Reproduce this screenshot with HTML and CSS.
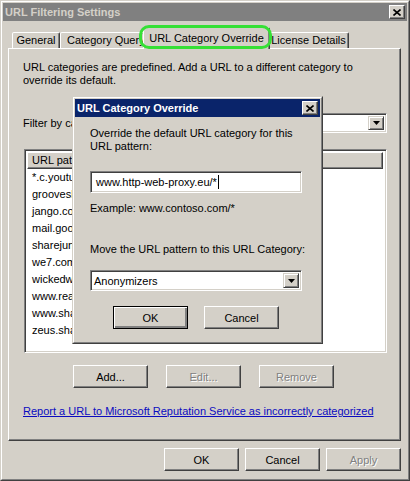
FILE: index.html
```html
<!DOCTYPE html>
<html lang="en">
<head>
<meta charset="utf-8">
<title>URL Filtering Settings</title>
<link rel="stylesheet" href="styles.css">
</head>
<body>
<div class="window">
  <div class="frame">
    <div class="caption inactive">
      <span class="caption-title">URL Filtering Settings</span>
      <span class="caption-btn">
        <svg width="8" height="7" viewBox="0 0 8 7"><path d="M0.5 0.5 L7.5 6.5 M7.5 0.5 L0.5 6.5" stroke="#000" stroke-width="1.6" fill="none"/></svg>
      </span>
    </div>
    <div class="client">
      <div class="tabs">
        <div class="tab tab-general">General</div>
        <div class="tab tab-query">Category Query</div>
        <div class="tab tab-override active">URL Category Override<span class="ring"></span></div>
        <div class="tab tab-license">License Details</div>
      </div>
      <div class="panel">
        <p class="desc">URL categories are predefined. Add a URL to a different category to<br>override its default.</p>
        <div class="filter-row">
          <span class="filter-label">Filter by category:</span>
          <div class="combo filter-combo">
            <span class="combo-value"></span>
            <span class="combo-btn"><svg width="7" height="4" viewBox="0 0 7 4"><polygon points="0,0 7,0 3.5,4" fill="#000"/></svg></span>
          </div>
        </div>
        <div class="list">
          <div class="list-header"><span class="list-header-cell">URL pattern</span></div>
          <div class="list-row">*.c.youtube.com/*</div>
          <div class="list-row">grooveshark.com/*</div>
          <div class="list-row">jango.com/*</div>
          <div class="list-row">mail.google.com/*</div>
          <div class="list-row">sharejunky.com/*</div>
          <div class="list-row">we7.com/*</div>
          <div class="list-row">wickedwords.com/*</div>
          <div class="list-row">www.realvnc.com/*</div>
          <div class="list-row">www.shareaza.com/*</div>
          <div class="list-row">zeus.shareaza.com/*</div>
        </div>
        <div class="btn-row">
          <button class="btn">Add...</button>
          <button class="btn" disabled>Edit...</button>
          <button class="btn" disabled>Remove</button>
        </div>
        <a class="link" href="#">Report a URL to Microsoft Reputation Service as incorrectly categorized</a>
      </div>
      <div class="footer">
        <button class="btn">OK</button>
        <button class="btn">Cancel</button>
        <button class="btn" disabled>Apply</button>
      </div>
    </div>
  </div>

  <div class="dialog">
    <div class="frame">
      <div class="caption active">
        <span class="caption-title">URL Category Override</span>
        <span class="caption-btn">
          <svg width="8" height="7" viewBox="0 0 8 7"><path d="M0.5 0.5 L7.5 6.5 M7.5 0.5 L0.5 6.5" stroke="#000" stroke-width="1.6" fill="none"/></svg>
        </span>
      </div>
      <div class="dialog-body">
        <p class="dlg-text">Override the default URL category for this<br>URL pattern:</p>
        <div class="field"><span class="field-text">www.http-web-proxy.eu/*</span><span class="caret"></span></div>
        <p class="dlg-text example">Example: www.contoso.com/*</p>
        <p class="dlg-text move">Move the URL pattern to this URL Category:</p>
        <div class="combo dlg-combo">
          <span class="combo-value">Anonymizers</span>
          <span class="combo-btn"><svg width="7" height="4" viewBox="0 0 7 4"><polygon points="0,0 7,0 3.5,4" fill="#000"/></svg></span>
        </div>
        <div class="dlg-buttons">
          <button class="btn default">OK</button>
          <button class="btn">Cancel</button>
        </div>
      </div>
    </div>
  </div>
</div>
</body>
</html>
```
FILE: styles.css
```css
html, body {
  margin: 0;
  background: #d4d0c8;
}

body {
  font-family: "Liberation Sans", Arial, sans-serif;
  font-size: 11px;
  color: #000;
}

p { margin: 0; }

/* Window chrome (classic 3D frame) */
.window {
  position: relative;
  width: 410px;
  height: 481px;
  box-sizing: border-box;
  border: 1px solid;
  border-color: #d4d0c8 #404040 #404040 #d4d0c8;
  background: #d4d0c8;
}

.frame {
  height: 100%;
  box-sizing: border-box;
  border: 1px solid;
  border-color: #fff #808080 #808080 #fff;
  padding: 1px;
  display: flex;
  flex-direction: column;
}

.caption {
  flex: none;
  height: 18px;
  display: flex;
  align-items: center;
  justify-content: space-between;
  padding: 0 2px;
}

.caption.inactive { background: #808080; color: #d4d0c8; }
.caption.active { background: #0a246a; color: #fff; }

.caption-title {
  font-weight: bold;
  white-space: nowrap;
}

.caption-btn {
  width: 16px;
  height: 14px;
  box-sizing: border-box;
  background: #d4d0c8;
  border: 1px solid;
  border-color: #fff #404040 #404040 #fff;
  box-shadow: inset -1px -1px #808080;
  display: flex;
  align-items: center;
  justify-content: center;
}

.caption-btn svg { display: block; }

/* Client area */
.client {
  flex: 1;
  display: flex;
  flex-direction: column;
  padding: 6px 6px 0 5px;
}

/* Tab strip */
.tabs {
  flex: none;
  height: 21px;
  display: flex;
  align-items: flex-end;
  padding-left: 4px;
  position: relative;
  z-index: 1;
}

.tab {
  height: 16px;
  box-sizing: border-box;
  border: 1px solid;
  border-bottom: none;
  border-color: #fff #404040 transparent #fff;
  box-shadow: inset -1px 0 #808080;
  border-radius: 2px 2px 0 0;
  background: #d4d0c8;
  line-height: 15px;
  text-align: center;
  white-space: nowrap;
  overflow: hidden;
}

.tab-general { width: 48px; }
.tab-query { width: 85px; text-align: left; padding-left: 6px; box-sizing: border-box; }
.tab-override { width: 127px; }
.tab-license { width: 81px; }

.tab.active {
  height: 22px;
  margin: 0 -2px -1px;
  line-height: 20px;
  position: relative;
  z-index: 2;
  overflow: visible;
}

.ring {
  position: absolute;
  left: -5px;
  right: -3px;
  top: -3px;
  bottom: 0;
  border: 3px solid #35e035;
  border-radius: 10px;
  pointer-events: none;
}

/* Tab page */
.panel {
  flex: none;
  height: 393px;
  box-sizing: border-box;
  border: 1px solid;
  border-color: #fff #404040 #404040 #fff;
  box-shadow: inset -1px -1px #808080;
  padding: 12px 13px 0 14px;
  display: flex;
  flex-direction: column;
}

.desc { line-height: 13px; }

.filter-row {
  display: flex;
  align-items: center;
  gap: 8px;
  margin-top: 26px;
  height: 20px;
}

.filter-label { white-space: nowrap; }

/* Sunken fields */
.combo, .field, .list {
  box-sizing: border-box;
  background: #fff;
  border: 1px solid;
  border-color: #808080 #fff #fff #808080;
  box-shadow: inset 1px 1px #404040, inset -1px -1px #d4d0c8;
}

.combo {
  display: flex;
  align-items: center;
  padding: 2px;
}

.filter-combo { flex: 1; height: 20px; }

.combo-value {
  flex: 1;
  padding-left: 1px;
  white-space: nowrap;
}

.combo-btn {
  width: 16px;
  height: 100%;
  box-sizing: border-box;
  background: #d4d0c8;
  border: 1px solid;
  border-color: #d4d0c8 #404040 #404040 #d4d0c8;
  box-shadow: inset 1px 1px #fff, inset -1px -1px #808080;
  display: flex;
  align-items: center;
  justify-content: center;
}

.combo-btn svg { display: block; }

/* List view */
.list {
  margin: 16px 0 0 1px;
  height: 204px;
  padding: 2px;
  overflow: hidden;
}

.list-header {
  height: 17px;
  box-sizing: border-box;
  background: #d4d0c8;
  border: 1px solid;
  border-color: #fff #404040 #404040 #fff;
  box-shadow: inset -1px -1px #808080;
  margin-right: 1px;
  padding-left: 4px;
  line-height: 15px;
  white-space: nowrap;
}

.list-row {
  height: 17px;
  line-height: 17px;
  padding-left: 5px;
  white-space: nowrap;
}

/* Push buttons */
.btn {
  width: 75px;
  height: 23px;
  box-sizing: border-box;
  padding: 0;
  font: inherit;
  color: #000;
  background: #d4d0c8;
  border: 1px solid;
  border-color: #fff #404040 #404040 #fff;
  box-shadow: inset -1px -1px #808080;
  border-radius: 0;
}

.btn:disabled {
  color: #808080;
  text-shadow: 1px 1px #fff;
}

.btn.default {
  border-color: #000;
  box-shadow: inset 1px 1px #fff, inset -2px -2px #808080;
}

.btn-row {
  display: flex;
  gap: 18px;
  margin-top: 12px;
  padding-left: 50px;
}

.link {
  margin-top: 17px;
  line-height: 13px;
  color: #0b0bc0;
  text-decoration: underline;
  white-space: nowrap;
  align-self: flex-start;
}

.footer {
  display: flex;
  justify-content: flex-end;
  gap: 6px;
  margin-top: 7px;
}

/* Modal dialog on top of the property page */
.dialog {
  position: absolute;
  left: 71px;
  top: 95px;
  width: 251px;
  height: 248px;
  box-sizing: border-box;
  border: 1px solid;
  border-color: #d4d0c8 #404040 #404040 #d4d0c8;
  background: #d4d0c8;
  z-index: 5;
}

.dialog-body {
  padding: 10px 0 0 15px;
  display: flex;
  flex-direction: column;
  align-items: flex-start;
}

.dlg-text {
  line-height: 13px;
  white-space: nowrap;
}

.field {
  margin-top: 18px;
  width: 212px;
  height: 22px;
  padding-left: 5px;
  display: flex;
  align-items: center;
}

.caret {
  width: 1px;
  height: 14px;
  background: #000;
  margin-left: 1px;
}

.example { margin-top: 9px; }
.move { margin-top: 28px; }

.dlg-combo {
  margin-top: 14px;
  width: 212px;
  height: 21px;
}

.dlg-buttons {
  display: flex;
  gap: 16px;
  margin-top: 15px;
  align-self: stretch;
  padding-left: 23px;
}
```
